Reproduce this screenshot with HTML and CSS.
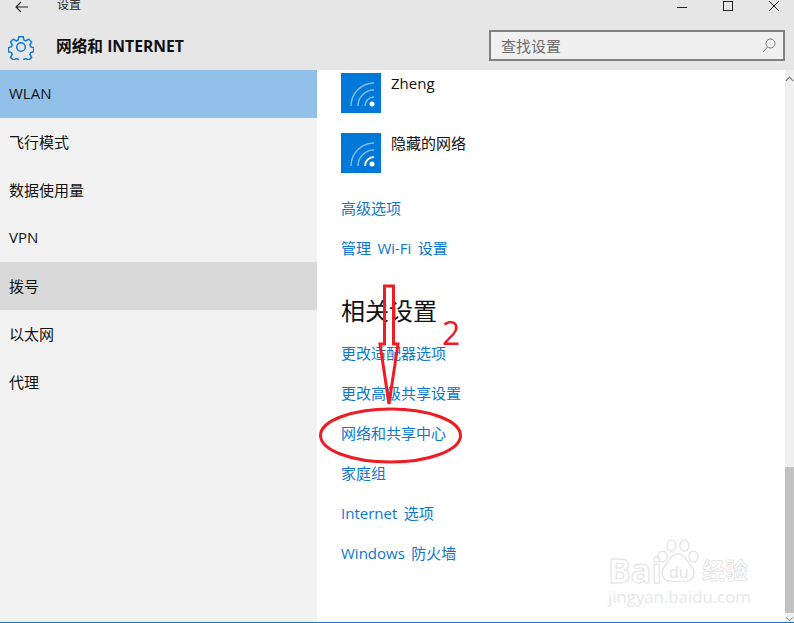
FILE: index.html
```html
<!DOCTYPE html>
<html lang="zh-CN">
<head>
<meta charset="utf-8">
<title>设置</title>
<link rel="stylesheet" href="styles.css">
</head>
<body>
<div class="window">
  <header class="header">
    <div class="titlebar">
      <svg class="back" width="16" height="12" viewBox="0 0 16 12"><path d="M14 6H2M7 1 2 6l5 5" fill="none" stroke="#222" stroke-width="1.100"/></svg>
      <span class="title">设置</span>
      <div class="controls">
        <svg width="10" height="10" viewBox="0 0 10 10"><path d="M0 6.500H10" stroke="#222" fill="none"/></svg>
        <svg width="10" height="10" viewBox="0 0 10 10"><rect x=".5" y=".5" width="9" height="9" stroke="#222" fill="none"/></svg>
        <svg width="10" height="10" viewBox="0 0 10 10"><path d="M0 0 10 10M10 0 0 10" stroke="#222" fill="none"/></svg>
      </div>
    </div>
    <div class="headrow">
      <svg class="gear" width="26" height="26" viewBox="0 0 26 26"><path d="M10.800 2.500h4.400l.7 3.300 2 .9 2.900-1.800 3 3-1.800 2.900.9 2 3 .8v4.200l-3 .8-.9 2 1.800 2.900-3 3-2.900-1.800-2 .9-.7 2.900h-4.400l-.7-2.900-2-.9-2.900 1.800-3-3 1.800-2.900-.9-2-3-.8v-4.200l3-.8.900-2-1.800-2.900 3-3 2.900 1.800 2-.9z" transform="translate(.3 .3) scale(.98)" fill="none" stroke="#0a78d7" stroke-width="1.500"/><circle cx="13" cy="13" r="4.300" fill="none" stroke="#0a78d7" stroke-width="1.500"/></svg>
      <h1 class="pagetitle">网络和 INTERNET</h1>
      <div class="search">
        <span>查找设置</span>
        <svg width="14" height="16" viewBox="0 0 14 16"><circle cx="8.500" cy="6.500" r="4.500" fill="none" stroke="#777"/><path d="M5.500 10 1 15" stroke="#777" fill="none"/></svg>
      </div>
    </div>
  </header>
  <div class="body">
    <nav class="side">
      <a class="item active">WLAN</a>
      <a class="item">飞行模式</a>
      <a class="item">数据使用量</a>
      <a class="item">VPN</a>
      <a class="item hover">拨号</a>
      <a class="item">以太网</a>
      <a class="item">代理</a>
    </nav>
    <main class="content">
      <div class="net">
        <span class="tile"><svg width="40" height="40" viewBox="0 0 40 40"><g fill="none" stroke="#7fbcf0" stroke-width="1.500"><path d="M10 33A23 23 0 0 1 33 10"/><path d="M17 33A16 16 0 0 1 33 17"/><path d="M24 33A9 9 0 0 1 33 24"/></g><circle cx="31" cy="31" r="2.500" fill="#fff"/></svg></span>
        <span class="netname">Zheng</span>
      </div>
      <div class="net">
        <span class="tile"><svg width="40" height="40" viewBox="0 0 40 40"><g fill="none" stroke="#7fbcf0" stroke-width="1.500"><path d="M10 33A23 23 0 0 1 33 10"/><path d="M17 33A16 16 0 0 1 33 17"/></g><path d="M24 33A9 9 0 0 1 33 24" fill="none" stroke="#fff" stroke-width="2"/><circle cx="31" cy="31" r="2.500" fill="#fff"/></svg></span>
        <span class="netname">隐藏的网络</span>
      </div>
      <a class="link first">高级选项</a>
      <a class="link">管理 Wi-Fi 设置</a>
      <h2 class="section">相关设置</h2>
      <a class="link rel">更改适配器选项</a>
      <a class="link">更改高级共享设置</a>
      <a class="link">网络和共享中心</a>
      <a class="link">家庭组</a>
      <a class="link">Internet 选项</a>
      <a class="link">Windows 防火墙</a>
    </main>
    <div class="scroll">
      <svg class="chev up" width="9" height="6" viewBox="0 0 10 6"><path d="M1 5l4-4 4 4" fill="none" stroke="#777" stroke-width="1.300"/></svg>
      <div class="thumb"></div>
      <svg class="chev" width="9" height="6" viewBox="0 0 10 6"><path d="M1 1l4 4 4-4" fill="none" stroke="#777"/></svg>
    </div>
  </div>
  <div class="bottomline"></div>

  <svg class="marks" width="794" height="623" viewBox="0 0 794 623">
    <g fill="none" stroke="#ee1c25" stroke-width="3">
      <path d="M384.500 286H393.500V344H398L389 404 380 344H384.500Z"/>
      <ellipse cx="390.500" cy="435.500" rx="70" ry="26.500"/>
    </g>
    <text x="442" y="345" class="two">2</text>
  </svg>

  <div class="wm" aria-hidden="true">
    <svg class="paw" width="42" height="50" viewBox="0 0 46 50"><g fill="#fff" stroke="#e2e2e2" stroke-width="1.300"><ellipse cx="6" cy="18" rx="5" ry="6"/><ellipse cx="16" cy="6" rx="5" ry="6"/><ellipse cx="30" cy="6" rx="5" ry="6"/><ellipse cx="40" cy="18" rx="5" ry="6"/><path d="M23 15C31 15 33 24 38 29 43 35 40 45 31 45H15C6 45 3 35 8 29 13 24 15 15 23 15Z"/></g></svg>
    <span class="bai">Bai</span><span class="du">du</span><span class="jy">经验</span>
    <span class="wmurl">jingyan.baidu.com</span>
  </div>
</div>
</body>
</html>
```

FILE: styles.css
```css
* { box-sizing: border-box; }
html, body { margin: 0; padding: 0; }
body { width: 794px; height: 623px; overflow: hidden; font-family: "Open Sans", "Noto Sans CJK SC", sans-serif; }
.window { position: relative; width: 794px; height: 623px; background: #fff; display: flex; flex-direction: column; overflow: hidden; }
.header { height: 70px; background: #e6e6e6; flex: none; }
.titlebar { height: 14px; position: relative; display: flex; align-items: center; }
.back { margin-left: 14px; }
.title { margin-left: 27px; font-size: 12px; color: #222; line-height: 14px; transform: translateY(-2px); }
.controls { margin-left: auto; display: flex; gap: 36px; margin-right: 15px; transform: translateY(-1px); }
.headrow { height: 56px; display: flex; align-items: center; }
.gear { margin-left: 8px; flex: none; margin-top: 9px; }
.pagetitle { margin: 8px 0 0 22px; font-size: 15.700px; font-weight: 700; color: #111; line-height: 20px; }
.search { margin: 6px 9px 0 auto; width: 296px; height: 31px; border: 2px solid #808080; background: #f0f0f0; display: flex; align-items: center; justify-content: space-between; padding: 0 7px 0 10px; font-size: 15px; color: #6d6d6d; }
.body { flex: 1; display: flex; min-height: 0; }
.side { width: 317px; background: #f2f2f2; flex: none; display: flex; flex-direction: column; }
.item { height: 48px; display: flex; align-items: center; padding: 0 0 2px 9px; font-size: 15px; color: #111; }
.active { background: #91c1e8; }
.hover { background: #d9d9d9; }
.content { flex: 1; padding: 3px 0 0 24px; display: flex; flex-direction: column; align-items: flex-start; }
.net { display: flex; height: 60px; gap: 10px; }
.tile { width: 40px; height: 40px; background: #0078d7; display: block; }
.tile svg { display: block; }
.netname { font-size: 15px; line-height: 20px; color: #111; }
.link { height: 40px; line-height: 20px; font-size: 15px; color: #0a78d2; flex: none; word-spacing: 2.500px; }
.first { margin-top: 5px; }
.section { margin: 13px 0 0; height: 40px; font-size: 24px; font-weight: 400; line-height: 40px; color: #111; }
.rel { margin-top: 12px; }
.scroll { width: 9px; flex: none; background: #f0f0f0; display: flex; flex-direction: column; align-items: center; padding-top: 3px; }
.up { margin-bottom: 385px; }
.thumb { width: 9px; height: 146px; background: #c2c2c2; flex: none; }
.chev { margin-top: 3px; flex: none; }
.bottomline { height: 1px; background: #0a78d7; flex: none; }
.marks { position: absolute; left: 0; top: 0; pointer-events: none; }
.two { font-size: 32px; fill: #ee1c25; font-family: "Open Sans", sans-serif; }
.wm { position: absolute; left: 608px; top: 536px; width: 152px; height: 75px; color: #e4e4e4; }
.paw { position: absolute; left: 49px; top: 2px; }
.bai, .du, .jy, .wmurl { position: absolute; }
.bai { left: 0; top: 18px; font-size: 34px; line-height: 32px; font-weight: 700; color: #fff; -webkit-text-stroke: 1px #e2e2e2; }
.du { left: 61px; top: 27px; font-size: 16px; line-height: 18px; color: #e2e2e2; z-index: 1; }
.jy { left: 94px; top: 22px; font-size: 23px; line-height: 24px; font-weight: 700; color: #fff; -webkit-text-stroke: .7px #e2e2e2; white-space: nowrap; }
.wmurl { left: 0; top: 51px; font-size: 16.800px; line-height: 20px; white-space: nowrap; color: #e8e8e8; }
```
